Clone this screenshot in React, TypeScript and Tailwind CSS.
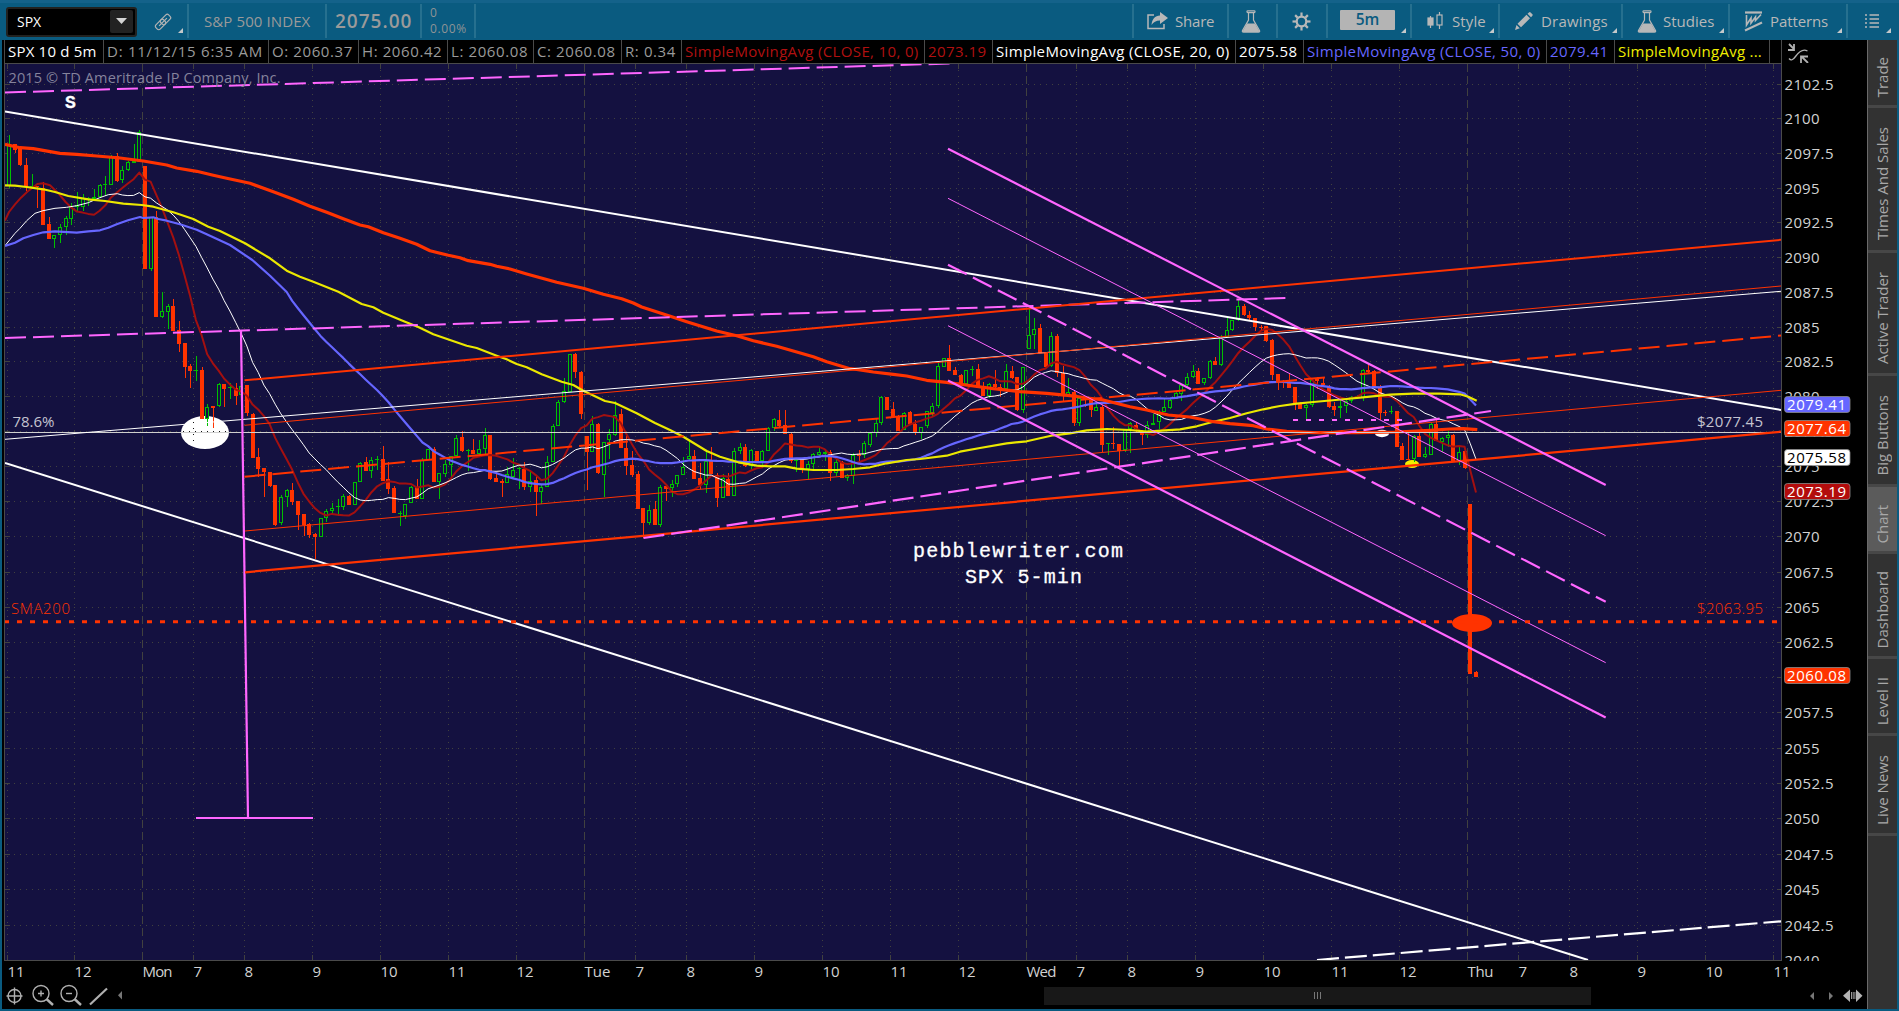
import React from "react";

type Group = { base: number; rows: string };

// One entry per 5-minute bar: direction + body top, body bottom, high, low (thirds of a pixel below the group's base).
const GROUPS: Group[] = [
  {
    base: 100,
    rows: `G135,258,105,264 R132,150,132,158 R147,196,145,198 R195,262,175,272 G258,262,222,262 R258,262,258,323
R264,374,246,374 R372,416,351,416 G406,416,405,443 G380,406,372,429 G355,380,348,405 G320,358,310,375 G315,320,276,332
G293,320,283,332 G295,300,292,318 G290,296,266,298 G254,290,252,290 G252,255,228,287 G167,254,165,254 R168,242,159,245
G211,241,198,250 G187,211,183,213 G184,188,132,188 G95,185,90,187 R198,507,198,507 G350,508,350,512 R352,650,333,650
G634,650,576,655 G619,637,612,686 R618,692,597,692 R690,731,663,755 R730,800,730,834 R797,812,792,863 G809,812,768,843
R810,958,801,958 G920,958,913,978 R918,923,918,983 G853,919,850,920 R852,866,852,921 G860,864,849,897 R863,887,850,914
G857,885,857,885 R856,940,856,947 R941,1073,938,1073 R1071,1107,1044,1131 R1104,1116,1104,1190 R1116,1157,1116,1160
R1155,1274,1155,1277 G1192,1270,1186,1274 G1171,1192,1167,1221 R1170,1206,1149,1215 R1203,1245,1203,1290
R1242,1274,1242,1308 R1273,1304,1269,1314 R1302,1310,1300,1377 G1255,1310,1255,1310 G1234,1255,1228,1266
G1225,1234,1209,1242 G1218,1221,1196,1248 G1189,1220,1182,1230 R1187,1215,1185,1215 G1147,1216,1147,1216
G1090,1147,1086,1147 R1087,1112,1071,1112 G1081,1112,1071,1134 G1078,1081,1068,1110 R1077,1142,1038,1142
R1138,1166,1087,1182 R1163,1238,1157,1238 G1238,1241,1232,1277 G1213,1247,1213,1256 G1161,1210,1158,1210
R1160,1196,1137,1196 G1080,1196,1074,1196 G1048,1080,1046,1080 R1047,1145,1041,1147 G1120,1145,1120,1196
G1093,1122,1079,1131 G1068,1094,1068,1134 G1013,1067,1005,1067 R1011,1053,993,1055 G1049,1053,1046,1113
R1050,1062,1017,1062`,
  },
  {
    base: 320,
    rows: `G386,402,360,405 G346,386,324,403 R345,477,345,480 R474,485,455,485 R483,490,477,531 G462,490,442,490
G451,470,414,474 G445,448,440,507 R447,500,426,509 G482,500,451,515 R480,516,469,588 G502,515,493,552 G427,500,409,500
G317,427,312,427 G247,317,240,317 G214,247,175,248 G103,215,102,216 R102,156,99,174 R156,282,153,297 R348,396,348,510
G313,395,288,395 R312,459,309,462 G367,464,365,530 G341,359,327,417 G286,344,244,348 R282,383,267,383 R384,438,348,464
R435,464,393,471 R461,566,453,566 R564,608,564,654 G569,608,555,615 R567,614,543,614 G502,614,495,620 R498,506,498,543
G493,503,480,531 G466,493,465,500 G442,464,411,464 G409,417,361,423 R408,476,390,476 R474,494,429,507 G423,494,397,518
R422,461,381,461 R465,533,459,561 G473,533,462,533 R477,527,459,527 G394,527,384,527 G382,394,369,402 R381,437,372,440
G391,437,387,447 R393,424,393,424 G394,423,391,434 G325,394,322,394 G298,325,293,333 R300,317,270,320 R315,341,270,341
R342,422,339,430`,
  },
  {
    base: 300,
    rows: `G479,482,476,516 R479,508,479,518 G493,508,482,537 G463,493,460,507 G457,464,438,472 G457,461,451,482
R457,518,451,543 G487,518,476,528 R486,534,483,534 G526,533,522,542 G465,527,459,552 R463,468,451,482 G430,466,422,475
G398,434,397,440 G370,398,358,410 G292,370,288,374 R291,330,291,330 R327,351,307,352 R347,393,345,393 G338,391,336,391
R336,372,333,372 R371,397,360,404 G382,398,382,416 G334,379,332,384 G319,340,309,348 G199,319,189,324 G175,202,174,202
R174,212,135,212 R210,224,202,224 R225,255,222,255 G211,253,210,255 G207,211,198,229 R207,261,192,261 R261,288,246,288
G253,289,250,295 R252,262,210,265 R262,265,252,290 G213,267,192,267 R213,233,198,237 R231,329,231,334 G202,329,202,338
G106,148,25,148 G86,106,54,147 R84,159,72,159 R159,201,157,201 G108,198,96,200 R108,218,102,231 R219,286,198,303
G277,286,234,286 R276,369,270,378 G295,369,290,378 R295,300,290,322 R300,330,295,350 G322,332,309,332 R321,434,315,456
G430,433,430,464 R430,433,382,447 R432,453,432,498 G391,450,387,457 G370,388,366,459 R376,388,366,399 R399,405,390,434
G376,404,364,414 G370,376,343,376 G346,367,330,387`,
  },
  {
    base: 260,
    rows: `G442,457,415,457 G419,443,417,447 G399,418,394,418 G376,402,373,422 G352,376,340,382 G333,352,315,354
R333,372,324,372 G355,370,355,375 G304,355,300,356 R303,315,291,315 G235,314,226,318 G211,230,172,231 G181,211,180,213
G139,181,118,183 R138,165,132,167 R165,174,153,183 R174,201,174,213 R200,203,195,213 R199,243,199,245 R240,345,237,360
R342,366,342,390 R365,370,360,384 R370,384,340,384 R381,433,381,450 R432,447,427,447 G436,445,432,480 G359,436,355,440
R355,364,352,388 R370,374,351,382 R380,441,375,443 R439,450,427,468 G438,445,417,474 G424,438,420,460 G412,424,408,430
G408,412,405,415 G330,415,328,422 R331,337,313,340 R334,384,330,384 R384,458,375,480 R456,459,450,468 G454,457,438,462
R454,561,454,561 R558,600,549,600 R597,600,520,600 G528,598,525,606 R528,591,516,591 G583,591,560,594 G493,584,490,586
R492,543,475,543 G535,545,530,576 G526,535,512,562 R525,603,522,603 G577,603,560,615 R574,625,572,627`,
  },
  { base: 300, rows: `R612,1122,612,1122 R1116,1131,1112,1131` },
];

const CANDLES = GROUPS.flatMap((g) =>
  g.rows
    .split(/\s+/)
    .filter(Boolean)
    .map((r) => {
      const [top, bottom, high, low] = r.slice(1).split(",").map((v) => g.base + Number(v) / 3);
      return { up: r[0] === "G", top, bottom, high, low };
    })
).map((c, i) => ({ ...c, x: 9 + i * 5.664 }));

const CLOSES = CANDLES.map((c) => (c.up ? c.top : c.bottom));

type Pt = [number, number];

const pts = (ox: number, oy: number, s: string): Pt[] =>
  s.split(" ").map((p) => {
    const [x, y] = p.split(",").map(Number);
    return [ox + x / 3, oy + y / 3];
  });

const sma = (n: number): Pt[] =>
  CANDLES.slice(n).map((c, k) => {
    const i = k + n;
    let sum = 0;
    for (let j = i - n + 1; j <= i; j++) sum += CLOSES[j];
    return [c.x, sum / n];
  });

const toPoints = (p: Pt[]) => p.map(([x, y]) => `${x.toFixed(1)},${y.toFixed(1)}`).join(" ");

const SMA10 = toPoints([
  ...pts(0, 100, "15,362 27,336 45,313 63,293 82,275 112,252 129,250 150,256 178,283"),
  ...sma(10),
]);
const SMA20 = toPoints([
  ...pts(0, 100, "15,437 45,400 60,385 80,362 105,340 129,332 165,325 200,322 230,317 265,308 299,293 325,284 352,281"),
  ...sma(20),
]);
const SMA50 = toPoints([
  ...pts(
    0,
    100,
    "15,438 45,428 70,415 100,405 130,397 165,394 230,398 265,394 300,391 325,383 350,373 384,361 420,351 430,354 460,352 475,357 500,362 540,373 590,389 620,403 690,435 757,480 810,527 860,576"
  ),
  ...sma(50),
]);
const SMA100 = toPoints([
  ...pts(
    0,
    100,
    "15,256 45,257 80,261 130,268 165,276 205,288 265,298 315,303 370,311 425,315 460,320 520,337 580,357 625,380 660,393 735,430 810,475 860,512 900,530 940,545 1015,575 1085,612 1120,622 1150,638 1215,665 1255,681"
  ),
  ...pts(
    300,
    320,
    "400,43 500,77 530,84 590,107 620,118 650,132 680,142 725,163 785,185 820,195 850,212 915,243 945,249 1010,280 1065,309 1110,330 1150,350 1220,393 1260,410 1315,427 1370,437"
  ),
  ...pts(
    760,
    300,
    "30,499 75,499 110,506 160,510 230,510 280,507 330,502 380,490 440,480 480,477 560,467 600,455 660,444 740,430 800,424 880,406 930,400"
  ),
  ...pts(
    1080,
    260,
    "20,511 80,507 150,510 200,515 300,508 350,499 400,485 450,474 500,460 550,448 600,438 650,431 700,426 800,417 870,410 930,404 1000,401 1080,401 1140,403 1165,410 1190,422"
  ),
]);
const SMA200 = toPoints([
  ...pts(
    0,
    100,
    "15,133 60,143 100,146 180,160 230,163 290,168 360,174 430,183 500,195 530,204 590,214 640,226 680,235 750,250 820,275 880,298 930,319 980,337 1030,356 1080,375 1105,380 1150,398 1200,415 1250,433 1290,452 1345,466"
  ),
  ...pts(
    460,
    120,
    "0,413 25,422 90,433 110,439 150,447 200,462 290,487 370,505 430,523 485,536 520,549 545,561 580,572 640,592 680,605 770,633 830,647 880,662 950,679 1060,710 1100,725 1170,746"
  ),
  ...pts(
    760,
    300,
    "290,208 340,216 400,223 440,228 500,241 560,247 640,258 700,266 780,275 860,280 930,287"
  ),
  ...pts(
    1080,
    260,
    "0,411 70,420 150,440 200,450 265,465 330,471 400,485 450,491 520,497 560,507 620,514 700,518 830,518 950,516 1050,511 1110,507 1150,506 1192,509"
  ),
]);

const HOURS: [number, string][] = [
  [7.5, "11"], [74.5, "12"], [142.5, "Mon"], [193.5, "7"], [244.5, "8"], [312.5, "9"], [380.5, "10"], [448.5, "11"],
  [516.5, "12"], [584.5, "Tue"], [635.5, "7"], [686.5, "8"], [754.5, "9"], [822.5, "10"], [890.5, "11"], [958.5, "12"],
  [1026.5, "Wed"], [1076.5, "7"], [1127.5, "8"], [1195.5, "9"], [1263.5, "10"], [1331.5, "11"], [1399.5, "12"],
  [1467.5, "Thu"], [1518.5, "7"], [1569.5, "8"], [1637.5, "9"], [1705.5, "10"], [1773.5, "11"],
];

const LABEL_WIDTH: Record<string, number> = { Mon: 30, Tue: 26, Wed: 30, Thu: 26 };

const PRICES = Array.from({ length: 26 }, (_, k) => ({
  y: Math.floor(84.1 + 34.58 * k + 0.0193 * k * k) + 0.5,
  label: String(2102.5 - 2.5 * k),
}));

const BADGES: [number, string, string, string][] = [
  [396.5, "2079.41", "#6666ff", "#ffffff"],
  [420.5, "2077.64", "#ff3300", "#ffffff"],
  [449.5, "2075.58", "#ffffff", "#000000"],
  [483.5, "2073.19", "#b30c0c", "#ffffff"],
  [667.5, "2060.08", "#ff3300", "#ffffff"],
];

const P = "#ff66ff";
const R = "#ff3300";
// x1, y1, x2, y2, colour, width, dash pattern
const LINES: [number, number, number, number, string, number, string?][] = [
  [5, 111.5, 1781, 410, "#ffffff", 2],
  [5, 463, 1588, 960, "#ffffff", 2],
  [5, 439.3, 1781, 291.3, "#ffffff", 1],
  [1317, 960, 1781, 921.3, "#ffffff", 2.2, "22 6"],
  [5, 92.5, 950, 63.5, P, 2, "21 7"],
  [5, 338, 1286, 298, P, 2, "21 7"],
  [241, 331, 248, 818, P, 2.2],
  [196, 818, 313, 818, P, 2],
  [244.5, 380.3, 1781, 239.8, R, 2],
  [244.5, 425.3, 1781, 286, R, 1],
  [244.5, 476.7, 1781, 335.5, R, 2, "21 7"],
  [245, 531, 1781, 390.3, R, 1],
  [245, 572.3, 1781, 431.7, R, 2.2],
  [643.5, 538, 1491, 411, P, 2.2, "21 7"],
  [948, 148.7, 1605.7, 485, P, 2.2],
  [948, 198.3, 1605.7, 535.7, P, 1],
  [948, 264.7, 1605.7, 601.7, P, 2.2, "21 7"],
  [948, 325.7, 1605.7, 662.7, P, 1],
  [948, 380.5, 1605.7, 717.5, P, 2.2],
  [1293, 420, 1403, 420, P, 2, "5 8"],
  [4, 621.7, 1781, 621.7, R, 3, "5 8"],
];

function Chart() {
  return (
    <svg
      className="block shrink-0 font-['Open_Sans','Noto_Sans',sans-serif]"
      width={1865}
      height={919}
      viewBox="2 63 1865 919"
    >
      <defs>
        <clipPath id="plot">
          <rect x={5} y={64} width={1776} height={896} />
        </clipPath>
        <clipPath id="axis">
          <rect x={1781} y={64} width={86} height={897} />
        </clipPath>
      </defs>
      <rect x={5} y={64} width={1776} height={896} fill="#141140" />
      <g clipPath="url(#plot)">
        <g stroke="#41413f" strokeWidth={1} shapeRendering="crispEdges">
          {PRICES.map((p) => (
            <line key={p.label} x1={8} x2={1777} y1={p.y} y2={p.y} strokeDasharray="1 5" />
          ))}
          {HOURS.map(([x, t], i) => (
            <g key={i}>
              <line x1={x} x2={x} y1={64} y2={960} strokeDasharray={t.length === 3 ? "8 4" : "1 5"} />
              <line x1={x} x2={x} y1={64} y2={69} />
              <line x1={x} x2={x} y1={955} y2={960} />
            </g>
          ))}
          {PRICES.map((p) => (
            <g key={p.label}>
              <line x1={5} x2={10} y1={p.y} y2={p.y} />
              <line x1={1777} x2={1781} y1={p.y} y2={p.y} />
            </g>
          ))}
        </g>
        <ellipse cx={205} cy={432.5} rx={24} ry={16.5} fill="#ffffff" />
        <ellipse cx={1382} cy={433.5} rx={7} ry={3.7} fill="#ffffff" />
        <ellipse cx={1412} cy={464} rx={7} ry={4} fill="#f2ee00" />
        <ellipse cx={1472} cy={623} rx={20} ry={9} fill="#ff3300" />
        <g stroke="#111111" strokeWidth={1} shapeRendering="crispEdges">
          <line x1={183} x2={227} y1={431.5} y2={431.5} strokeDasharray="1 5" />
          <line x1={193.5} x2={193.5} y1={422} y2={446} strokeDasharray="1 5" />
        </g>
        <g shapeRendering="crispEdges">
          {CANDLES.map((c, i) => {
            const l = Math.round(c.x) - 2;
            const t = Math.round(c.top);
            const b = Math.max(Math.round(c.bottom), t + 1);
            const h = Math.round(c.high);
            const w = Math.round(c.low);
            const color = c.up ? "#00c000" : "#ff3300";
            return (
              <g key={i} fill={color}>
                {h < t && <rect x={l + 1.5} y={h} width={1} height={t - h} />}
                {w > b && <rect x={l + 1.5} y={b} width={1} height={w - b} />}
                {c.up && b - t > 2 ? (
                  <rect x={l + 0.5} y={t + 0.5} width={3} height={b - t - 1} fill="#141140" stroke={color} />
                ) : (
                  <rect x={l} y={t} width={4} height={b - t} />
                )}
              </g>
            );
          })}
        </g>
        <g fill="none" strokeLinejoin="round">
          <polyline points={SMA10} stroke="#a31010" strokeWidth={2} />
          <polyline points={SMA20} stroke="#ffffff" strokeWidth={1} />
          <polyline points={SMA50} stroke="#6666ff" strokeWidth={2.2} />
          <polyline points={SMA100} stroke="#ebe800" strokeWidth={2.2} />
          <polyline points={SMA200} stroke="#ff3300" strokeWidth={3.2} />
        </g>
        <line x1={5} x2={1781} y1={432.5} y2={432.5} stroke="#cfcfcf" />
        {LINES.map(([x1, y1, x2, y2, c, w, d], i) => (
          <line key={i} x1={x1} y1={y1} x2={x2} y2={y2} stroke={c} strokeWidth={w} strokeDasharray={d} />
        ))}
        <g fontSize={15} fill="#c4c4d0">
          <text x={8.5} y={82.5} textLength={272} fill="#85839c" fontSize={14.5}>2015 © TD Ameritrade IP Company, Inc.</text>
          <text x={12.5} y={427} textLength={42}>78.6%</text>
          <text x={1697} y={427} textLength={66}>$2077.45</text>
          <g fill="#ff3300" fontWeight={300}>
            <text x={11} y={614} textLength={59}>SMA200</text>
            <text x={1697} y={614} textLength={66}>$2063.95</text>
          </g>
        </g>
        <g
          className="font-['Liberation_Mono',monospace]"
          fill="#ffffff"
          fontSize={20}
          stroke="#ffffff"
          strokeWidth={0.3}
        >
          <text x={65} y={108} fontSize={18} fontWeight={700}>S</text>
          <text x={913} y={557} textLength={210}>pebblewriter.com</text>
          <text x={965} y={583} textLength={117}>SPX 5-min</text>
        </g>
      </g>
      <g stroke="#4a4a4a" strokeWidth={1} shapeRendering="crispEdges">
        <line x1={4.5} x2={4.5} y1={63} y2={961} />
        <line x1={1781.5} x2={1781.5} y1={63} y2={961} />
        <line x1={4} x2={1782} y1={960.5} y2={960.5} />
        <line x1={4} x2={1782} y1={63.5} y2={63.5} />
      </g>
      <g clipPath="url(#axis)" fontSize={15} fill="#d2d2d2">
        {PRICES.map((p) => (
          <text key={p.label} x={1784.5} y={p.y + 5.5} textLength={p.label.includes(".") ? 49 : 35}>
            {p.label}
          </text>
        ))}
        {BADGES.map(([y, t, bg, fg]) => (
          <g key={t}>
            <rect x={1784.5} y={y} width={65.5} height={16} rx={3} fill={bg} stroke="#8a8a8a" strokeOpacity={0.8} />
            <text x={1787} y={y + 13.5} textLength={59} fill={fg}>{t}</text>
          </g>
        ))}
      </g>
      <g fontSize={15} fill="#d2d2d2">
        {HOURS.map(([x, t], i) => (
          <text key={i} x={x} y={977} textLength={LABEL_WIDTH[t] ?? t.length * 8.5}>
            {t}
          </text>
        ))}
      </g>
    </svg>
  );
}

function Flask() {
  return (
    <svg width={20} height={23} viewBox="0 0 20 23" fill="none" stroke="#b8b8b8" strokeWidth={1.2}>
      <rect x={6} y={0.8} width={8} height={1.8} rx={0.8} />
      <path d="M7.5 3v7L1.5 20.5q-.6 1.7 1 1.7h15q1.600 0 1-1.700L12.500 10V3" />
      <path d="M6 13.500h8l4.300 7.500q0 1-1 1H2.700q-1 0-1-1z" fill="#b8b8b8" stroke="none" />
    </svg>
  );
}

function Corner() {
  return (
    <svg className="absolute right-[4px] bottom-[5px]" width={5} height={5}>
      <path d="M5 0V5H0z" fill="#c4c8ca" />
    </svg>
  );
}

function Cell({ className, corner, children }: { className: string; corner?: boolean; children?: React.ReactNode }) {
  return (
    <div
      className={`relative flex h-[34px] shrink-0 items-center border-l-2 border-[#26708f] text-[15px] text-[#b8b8b8] ${className}`}
    >
      {children}
      {corner && <Corner />}
    </div>
  );
}

function Toolbar() {
  return (
    <div className="flex h-[40px] shrink-0 items-start border-t-[3px] border-[#14628a] bg-[#0a5b80] pt-px">
      <div className="relative flex h-[34px] w-[187px] shrink-0 items-center">
        <div className="ml-[6px] mt-[1px] flex h-[30px] w-[131px] items-center justify-between rounded-[3px] border-2 border-[#222220] bg-black pl-[9px] pr-[2px]">
          <span className="text-[14px] text-white">SPX</span>
          <span className="flex h-[23px] w-[23px] items-center justify-center rounded-[2px] bg-[#222] pb-[2px]">
            <svg width={11} height={6}><path d="M0 0H11L5.500 6z" fill="#d4d4d4" /></svg>
          </span>
        </div>
        <svg className="ml-[17px] mt-px" width={18} height={18} viewBox="0 0 18 18" fill="none" stroke="#b4b4b4" strokeWidth={1.2}>
          <g transform="rotate(-45 9 9)">
            <rect x={0} y={6} width={11} height={6} rx={2} />
            <rect x={7} y={6} width={11} height={6} rx={2} />
            <path d="M3.500 9h11" />
          </g>
        </svg>
        <Corner />
      </div>
      <Cell className="w-[138px] pl-[15px] !text-[#9a9a9a]"><span className="tracking-[0.1px]">S&amp;P 500 INDEX</span></Cell>
      <Cell className="w-[95px] pl-[8px] !text-[#9a9a9a]"><span className="text-[19px] font-semibold tracking-[1px]">2075.00</span></Cell>
      <Cell className="w-[54px] pl-[8px] !text-[#8e9496]">
        <div className="text-[12px] leading-[16px] tracking-[0.6px]"><div>0</div><div>0.00%</div></div>
      </Cell>
      <Cell className="w-[658px]" />
      <Cell className="w-[95px] pl-[13px]">
        <svg width={21} height={18} viewBox="0 0 21 18" fill="none" stroke="#b8b8b8" strokeWidth={1.500}>
          <path d="M7 3H1V16.500H17V12" />
          <path d="M13 0l8 6-8 6V8.500C9 8.500 6.500 10 4.500 13 5 7 8 3.800 13 3.500z" fill="#b8b8b8" stroke="none" />
        </svg>
        <span className="ml-[7px] tracking-[-0.2px]">Share</span>
      </Cell>
      <Cell className="w-[49px] pl-[12px]"><Flask /></Cell>
      <Cell className="w-[50px] pl-[14px]">
        <svg width={19} height={19} viewBox="-9.500 -9.500 19 19" fill="none" stroke="#b8b8b8">
          <circle r={4.800} strokeWidth={2.200} />
          {[0, 45, 90, 135, 180, 225, 270, 315].map((a) => (
            <path key={a} d="M0-5.500V-9" strokeWidth={2.200} transform={`rotate(${a})`} />
          ))}
        </svg>
      </Cell>
      <Cell className="w-[84px] pl-[12px]" corner>
        <div className="mb-[2px] flex h-[20px] w-[55px] items-center justify-center rounded-[1px] bg-[#b4b4b4] text-[15.500px] font-semibold text-[#0a5b80]">5m</div>
      </Cell>
      <Cell className="w-[88px] pl-[15px]" corner>
        <svg width={16} height={18} viewBox="0 0 16 18" stroke="#b8b8b8" strokeWidth={1.200} fill="none">
          <path d="M3.500 4V16" /><rect x={1} y={6} width={5} height={7} fill="#b8b8b8" />
          <path d="M12.500 0V3M12.500 13V17" /><rect x={10} y={3} width={5} height={10} />
        </svg>
        <span className="ml-[9px] tracking-[0.1px]">Style</span>
      </Cell>
      <Cell className="w-[123px] pl-[15px]" corner>
        <svg width={18} height={18} viewBox="0 0 18 18" fill="#b8b8b8">
          <path d="M0 18l1.500-5L4.800 16.300zM2.500 11.800L11.500 2.800 15 6.300 6 15.300zM12.500 1.800L14 .4q.8-.6 1.600.1l1.800 1.800q.6.7 0 1.400L16 5.200z" />
        </svg>
        <span className="ml-[8px] tracking-[0.2px]">Drawings</span>
      </Cell>
      <Cell className="w-[107px] pl-[14px]" corner><Flask /><span className="ml-[6px]">Studies</span></Cell>
      <Cell className="w-[118px] pl-[13px]" corner>
        <svg width={21} height={21} viewBox="0 0 21 21" fill="none" stroke="#b8b8b8" strokeWidth={1.600}>
          <path d="M2 1.500H19" strokeWidth={2.200} /><path d="M2 19.500L19 11.500" strokeWidth={2.200} />
          <path d="M3.500 4V14L8 7V12L12.500 6V9.500L18 3.500" />
        </svg>
        <span className="ml-[6px] tracking-[-0.1px]">Patterns</span>
      </Cell>
      <Cell className="w-[49px] pl-[17px]" corner>
        <svg width={15} height={14} stroke="#b8b8b8" strokeWidth={1.500}>
          <path d="M0 1H2M4.500 1H14M0 5H2M4.500 5H14M0 9H2M4.500 9H14M0 13H2M4.500 13H14" />
        </svg>
      </Cell>
    </div>
  );
}

function InfoRow() {
  const cell = "flex h-[23px] shrink-0 items-center whitespace-pre border-r border-[#4a4a4a] pl-[3px] text-[15px]";
  return (
    <div className="flex h-[23px] w-[1865px] shrink-0 bg-black">
      <div className={`${cell} ml-[2px] w-[100px] border-l tracking-[0.2px] text-white`}>SPX 10 d 5m</div>
      <div className={`${cell} w-[165px] tracking-[0.75px] text-[#9a9a9a]`}>D: 11/12/15 6:35 AM</div>
      <div className={`${cell} w-[90px] tracking-[0.6px] text-[#9a9a9a]`}>O: 2060.37</div>
      <div className={`${cell} w-[89px] tracking-[0.6px] text-[#9a9a9a]`}>H: 2060.42</div>
      <div className={`${cell} w-[86px] tracking-[0.6px] text-[#9a9a9a]`}>L: 2060.08</div>
      <div className={`${cell} w-[88px] tracking-[0.6px] text-[#9a9a9a]`}>C: 2060.08</div>
      <div className={`${cell} w-[60px] tracking-[0.6px] text-[#9a9a9a]`}>R: 0.34</div>
      <div className={`${cell} w-[243px] tracking-[0.35px] text-[#b01010]`}>SimpleMovingAvg (CLOSE, 10, 0)</div>
      <div className={`${cell} w-[68px] tracking-[0.45px] text-[#b01010]`}>2073.19</div>
      <div className={`${cell} w-[243px] tracking-[0.35px] text-white`}>SimpleMovingAvg (CLOSE, 20, 0)</div>
      <div className={`${cell} w-[68px] tracking-[0.45px] text-white`}>2075.58</div>
      <div className={`${cell} w-[243px] tracking-[0.35px] text-[#6666ff]`}>SimpleMovingAvg (CLOSE, 50, 0)</div>
      <div className={`${cell} w-[68px] tracking-[0.45px] text-[#6666ff]`}>2079.41</div>
      <div className={`${cell} w-[155px] tracking-[0.25px] text-[#f0ee00]`}>SimpleMovingAvg ...</div>
      <div className={`${cell} w-[12px]`} />
      <svg className="ml-[6px] mt-[3px]" width={22} height={20} viewBox="0 0 22 20" fill="none" stroke="#b0b0b0" strokeWidth={1.300}>
        <path d="M1 15.500C3 18 5 17 7.500 13.500S14 5 19.500 8" />
        <path d="M1 1l5 5M6 1v6H0" strokeWidth={1.800} />
        <path d="M20 20l-6-6M13 20v-6.500H20" strokeWidth={1.800} />
      </svg>
    </div>
  );
}

function Tab({ label, className, active }: { label: string; className: string; active?: boolean }) {
  return (
    <div
      className={`flex shrink-0 items-center justify-center border-b-[3px] border-[#474747] pt-[10px] ${
        active ? "bg-[#5b5b5b]" : "bg-[#323232]"
      } ${className}`}
    >
      <span className="rotate-180 whitespace-nowrap text-[15px] leading-[29px] text-[#a8a8a8] [writing-mode:vertical-rl]">{label}</span>
    </div>
  );
}

function Sidebar() {
  return (
    <div className="flex w-[30px] shrink-0 flex-col border-l border-[#6a6a6a] bg-[#323232]">
      <Tab label="Trade" className="h-[68px]" />
      <Tab label="Times And Sales" className="h-[145px]" />
      <Tab label="Active Trader" className="h-[123px]" />
      <Tab label="Big Buttons" className="h-[111px]" />
      <Tab label="Chart" className="h-[67px]" active />
      <Tab label="Dashboard" className="h-[105px]" />
      <Tab label="Level II" className="h-[77px]" />
      <Tab label="Live News" className="h-[100px]" />
    </div>
  );
}

function BottomBar() {
  return (
    <div className="flex h-[27px] items-center">
      <svg className="ml-[4px]" width={120} height={26} viewBox="6 982.500 120 26" fill="none" stroke="#b0b0b0" strokeWidth={1.400}>
        <circle cx={14.500} cy={995.500} r={6.500} /><path d="M6.500 995.500H22.500M14.500 987V1004" />
        <circle cx={41} cy={993} r={8} /><path d="M38 993h6M41 990v6" /><path d="M46.500 998.500L53 1004.500" strokeWidth={2.400} />
        <circle cx={69} cy={993} r={8} /><path d="M66 993h6" /><path d="M74.500 998.500L81 1004.500" strokeWidth={2.400} />
        <path d="M90 1004L107 988" strokeWidth={2.200} />
        <path d="M122 990.500V999L118 994.800z" fill="#777" stroke="none" />
      </svg>
      <div className="ml-[918px] flex h-[18px] w-[547px] items-center justify-center gap-[2px] bg-[#181818]">
        <span className="h-[7px] w-px bg-[#777]" />
        <span className="h-[7px] w-px bg-[#777]" />
        <span className="h-[7px] w-px bg-[#777]" />
      </div>
      <svg className="ml-[217px]" width={56} height={16} viewBox="1808 987 56 16" fill="#777">
        <path d="M1814 991V999L1810 995zM1829 991V999L1833 995z" />
        <path d="M1850 988.500V1001L1843 994.800zM1856 988.500V1001L1862.500 994.800z" fill="#b4b4b4" />
        <path d="M1851 991H1852V998H1851zM1852.700 991H1853.700V998H1852.700zM1854.400 991H1855.400V998H1854.400z" fill="#999" />
      </svg>
    </div>
  );
}

export default function App() {
  return (
    <div className="flex h-[1011px] w-[1899px] flex-col overflow-hidden bg-[#0a5b80] font-['Open_Sans','Noto_Sans',sans-serif]">
      <Toolbar />
      <div className="flex h-[969px] shrink-0 pl-[2px]">
        <div className="flex w-[1865px] shrink-0 flex-col overflow-hidden bg-black">
          <InfoRow />
          <Chart />
          <BottomBar />
        </div>
        <Sidebar />
      </div>
    </div>
  );
}
